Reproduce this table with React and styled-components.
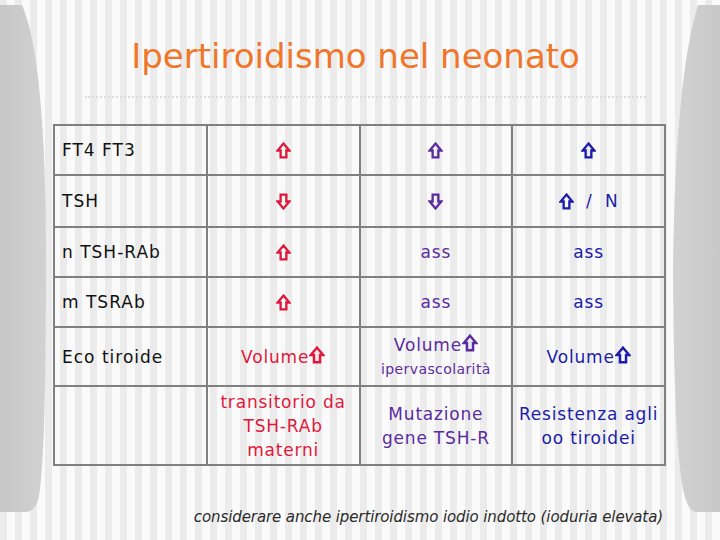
import React from "react";
import styled, { createGlobalStyle } from "styled-components";

const GlobalStyle = createGlobalStyle`
  html, body {
    margin: 0;
    padding: 0;
  }
  body {
    font-family: "DejaVu Sans", "Liberation Sans", sans-serif;
  }
`;

const colors = {
  orange: "#f0762a",
  red: "#e0183c",
  purple: "#5a2ca0",
  blue: "#1c1ca8",
  border: "#808080",
  text: "#111111",
};

const Page = styled.div`
  width: 720px;
  height: 540px;
  overflow: hidden;
  display: grid;
  grid-template-columns: 48px 1fr 48px;
  background: repeating-linear-gradient(
    90deg,
    #ebebeb 0px,
    #ebebeb 7px,
    #fafafa 7px,
    #fafafa 15px
  );
`;

const Side = styled.svg`
  display: block;
  width: 48px;
  height: 540px;
`;

const Main = styled.div`
  display: flex;
  flex-direction: column;
  padding: 34px 6px 0 5px;
`;

const Title = styled.h1`
  margin: 0;
  font-family: "DejaVu Sans", sans-serif;
  font-weight: normal;
  font-size: 34px;
  line-height: 44px;
  color: ${colors.orange};
  text-align: center;
  letter-spacing: 0;
  padding-right: 8px;
`;

const Rule = styled.div`
  margin: 18px 20px 26px 32px;
  height: 0;
  border-bottom: 2px dotted #dcdcdc;
`;

const Table = styled.table`
  width: 613px;
  border-collapse: collapse;
  table-layout: fixed;
  font-family: "DejaVu Sans", sans-serif;
  font-size: 17px;
`;

const Row = styled.tr`
  height: ${(p) => p.$h}px;
`;

const Label = styled.td`
  border: 2px solid ${colors.border};
  padding: 0 0 0 7px;
  color: ${colors.text};
  vertical-align: middle;
  letter-spacing: 1px;
`;

const Cell = styled.td`
  border: 2px solid ${colors.border};
  padding: 0;
  text-align: center;
  vertical-align: middle;
  color: ${(p) => colors[p.$c]};
  line-height: 24px;
  letter-spacing: 0.8px;
`;

const Small = styled.div`
  font-size: 14px;
  line-height: 24px;
  letter-spacing: 0.4px;
`;

const Footer = styled.p`
  margin: 42px 3px 0 0;
  line-height: 18px;
  text-align: right;
  font-family: "DejaVu Sans", sans-serif;
  font-style: italic;
  font-size: 15px;
  color: #2a2a2a;
  letter-spacing: -0.1px;
`;

const ArrowSvg = styled.svg`
  width: ${(p) => (p.$inline ? 16 : 15)}px;
  height: ${(p) => (p.$inline ? 18 : 17)}px;
  vertical-align: ${(p) => (p.$inline ? "-1px" : "-3px")};
`;

function Arrow({ down, inline }) {
  const d = "M7 1.5 L12.5 8 L9.7 8 L9.7 14.5 L4.3 14.5 L4.3 8 L1.5 8 Z";
  return (
    <ArrowSvg viewBox="0 0 14 16" $inline={inline}>
      <path
        d={d}
        fill="none"
        stroke="currentColor"
        strokeWidth="2.2"
        strokeLinejoin="miter"
        transform={down ? "rotate(180 7 8)" : undefined}
      />
    </ArrowSvg>
  );
}

function LeftSide() {
  return (
    <Side viewBox="0 0 48 540">
      <defs>
        <linearGradient id="lg" x1="0" x2="1" y1="0" y2="0">
          <stop offset="0" stopColor="#c6c6c6" />
          <stop offset="1" stopColor="#d2d2d2" />
        </linearGradient>
      </defs>
      <path
        d="M0 5 L22 5 Q46 60 46 260 Q46 470 38 500 Q34 512 26 512 L0 512 Z"
        fill="url(#lg)"
      />
    </Side>
  );
}

function RightSide() {
  return (
    <Side viewBox="0 0 48 540">
      <defs>
        <linearGradient id="rg" x1="0" x2="1" y1="0" y2="0">
          <stop offset="0" stopColor="#d2d2d2" />
          <stop offset="1" stopColor="#c8c8c8" />
        </linearGradient>
      </defs>
      <path
        d="M48 5 L26 5 Q3 80 1 270 Q2 470 14 500 Q18 512 24 512 L48 512 Z"
        fill="url(#rg)"
      />
    </Side>
  );
}

export default function App() {
  return (
    <>
      <GlobalStyle />
      <Page>
        <LeftSide />
        <Main>
          <Title>Ipertiroidismo nel neonato</Title>
          <Rule />
          <Table>
            <tbody>
              <Row $h={50}>
                <Label>FT4 FT3</Label>
                <Cell $c="red"><Arrow /></Cell>
                <Cell $c="purple"><Arrow /></Cell>
                <Cell $c="blue"><Arrow /></Cell>
              </Row>
              <Row $h={52}>
                <Label>TSH</Label>
                <Cell $c="red"><Arrow down /></Cell>
                <Cell $c="purple"><Arrow down /></Cell>
                <Cell $c="blue">
                  <Arrow /> &nbsp;/&nbsp; N
                </Cell>
              </Row>
              <Row $h={50}>
                <Label>n TSH-RAb</Label>
                <Cell $c="red"><Arrow /></Cell>
                <Cell $c="purple">ass</Cell>
                <Cell $c="blue">ass</Cell>
              </Row>
              <Row $h={50}>
                <Label>m TSRAb</Label>
                <Cell $c="red"><Arrow /></Cell>
                <Cell $c="purple">ass</Cell>
                <Cell $c="blue">ass</Cell>
              </Row>
              <Row $h={59}>
                <Label>Eco tiroide</Label>
                <Cell $c="red">Volume<Arrow inline /></Cell>
                <Cell $c="purple">
                  Volume<Arrow inline />
                  <Small>ipervascolarità</Small>
                </Cell>
                <Cell $c="blue">Volume<Arrow inline /></Cell>
              </Row>
              <Row $h={79}>
                <Label />
                <Cell $c="red">
                  transitorio da
                  <br />
                  TSH-RAb
                  <br />
                  materni
                </Cell>
                <Cell $c="purple">
                  Mutazione
                  <br />
                  gene TSH-R
                </Cell>
                <Cell $c="blue">
                  Resistenza agli
                  <br />
                  oo tiroidei
                </Cell>
              </Row>
            </tbody>
          </Table>
          <Footer>
            considerare anche ipertiroidismo iodio indotto (ioduria elevata)
          </Footer>
        </Main>
        <RightSide />
      </Page>
    </>
  );
}
